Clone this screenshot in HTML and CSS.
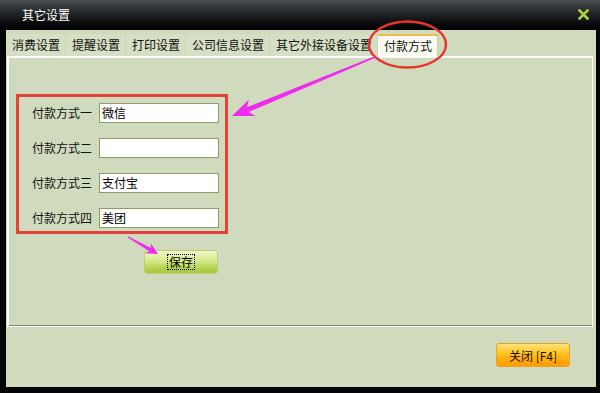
FILE: index.html
```html
<!DOCTYPE html>
<html lang="zh-CN">
<head>
<meta charset="utf-8">
<title>其它设置</title>
<link rel="stylesheet" href="styles.css">
</head>
<body>
<div class="window">
  <div class="titlebar">
    <span class="title">其它设置</span>
    <svg class="close-x" width="11" height="11" viewBox="0 0 11 11">
      <path d="M1.5 1.5 L9.5 9.5 M9.5 1.5 L1.5 9.5" stroke="#a9d443" stroke-width="2.6" stroke-linecap="square"/>
    </svg>
  </div>
  <div class="content">
    <div class="tabs">
      <div class="tab">消费设置</div>
      <div class="tab">提醒设置</div>
      <div class="tab">打印设置</div>
      <div class="tab">公司信息设置</div>
      <div class="tab">其它外接设备设置</div>
      <div class="tab active">付款方式</div>
    </div>
    <div class="panel">
      <div class="paybox">
        <div class="row"><span class="label">付款方式一</span><div class="field">微信</div></div>
        <div class="row"><span class="label">付款方式二</span><div class="field"></div></div>
        <div class="row"><span class="label">付款方式三</span><div class="field">支付宝</div></div>
        <div class="row"><span class="label">付款方式四</span><div class="field">美团</div></div>
      </div>
      <button class="save"><span class="focus">保存</span></button>
    </div>
    <div class="footer">
      <button class="closebtn">关闭 [F4]</button>
    </div>
  </div>
  <svg class="annot" width="600" height="393" viewBox="0 0 600 393">
    <ellipse cx="407.5" cy="44.5" rx="38.5" ry="23" fill="none" stroke="#e6332d" stroke-width="2.4"/>
    <polygon fill="#ee2bee" points="232,116 255.8,116 248.7,111.9 375.4,57.8 374.6,56.2 246.9,107.3 249,99.4"/>
    <polygon fill="#ee2bee" points="158,254 150.6,242.9 151.1,248 128.3,236.4 127.7,237.6 149.3,251.2 144.6,253.3"/>
  </svg>
</div>
</body>
</html>
```

FILE: styles.css
```css
* { box-sizing: border-box; }

html, body {
  margin: 0;
  padding: 0;
  background: #000;
}

body {
  font-family: "Noto Sans CJK SC", "Liberation Sans", sans-serif;
  font-size: 12px;
  color: #111;
}

.window {
  position: relative;
  width: 600px;
  height: 393px;
  background: #050505;
  overflow: hidden;
}

.titlebar {
  height: 30px;
  display: flex;
  align-items: center;
  justify-content: space-between;
  padding: 0 11px 0 22px;
  background: linear-gradient(to bottom, #4a4e51 0%, #2a2d2f 35%, #0c0d0e 75%, #000 100%);
}

.title {
  color: #fff;
  font-size: 12px;
  line-height: 14px;
  margin-top: -1px;
}

.close-x {
  display: block;
  margin-top: -2px;
}

.content {
  margin: 0 4px 0 6px;
  height: 357px;
  background: #d0dbbd;
  display: flex;
  flex-direction: column;
}

.tabs {
  height: 26px;
  display: flex;
  align-items: flex-end;
}

.tab {
  height: 22px;
  line-height: 21px;
  padding: 0 6px;
  white-space: nowrap;
  color: #111;
  background: #d5dfc4;
  box-shadow: inset -1px 0 0 #c8d4b2;
}

.tab.active {
  background: #f9fbf1;
  border-top: 2px solid #f1b74a;
  line-height: 19px;
  box-shadow: inset 1px 0 0 #fff, inset -1px 0 0 #e8c890;
}

.panel {
  margin-left: 1px;
  width: 586px;
  height: 271px;
  border-top: 2px solid #fff;
  border-left: 2px solid #fff;
  border-right: 1px solid #fff;
  border-bottom: 1px solid #fff;
  box-shadow: inset 0 -1px 0 #7f8874;
  padding: 36px 0 0 7px;
}

.paybox {
  width: 212px;
  border: 3px solid #e5423c;
  padding: 6px 6px 3px 13px;
  display: flex;
  flex-direction: column;
  gap: 15px;
}

.row {
  display: flex;
  align-items: center;
  gap: 7px;
}

.label {
  width: 60px;
  white-space: nowrap;
  line-height: 20px;
}

.field {
  width: 120px;
  height: 20px;
  background: #fff;
  border: 1px solid #8e9c66;
  padding: 0 2px;
  line-height: 17px;
  color: #000;
}

.save {
  display: flex;
  align-items: center;
  justify-content: center;
  margin: 16px 0 0 128px;
  width: 74px;
  height: 24px;
  padding: 0;
  border: 1px solid #b8d27a;
  border-radius: 3px;
  background: linear-gradient(to bottom, #f0f6c6 0%, #d8ea8c 45%, #b6d452 75%, #a6c83c 100%);
  font-family: inherit;
  font-size: 12px;
  color: #000;
}

.focus {
  outline: 1px dotted #000;
  padding: 0 1px;
  line-height: 14px;
}

.footer {
  display: flex;
  justify-content: flex-end;
  padding: 16px 26px 0 0;
}

.closebtn {
  width: 74px;
  height: 24px;
  padding: 0;
  border: 1px solid #e6a42a;
  border-radius: 3px;
  background: linear-gradient(to bottom, #ffe47a 0%, #ffc528 40%, #ffa90a 75%, #ff9c00 100%);
  font-family: "Noto Sans CJK SC", "Liberation Serif", serif;
  font-size: 12px;
  color: #1a1000;
  white-space: nowrap;
}

.annot {
  position: absolute;
  left: 0;
  top: 0;
  pointer-events: none;
}
```
